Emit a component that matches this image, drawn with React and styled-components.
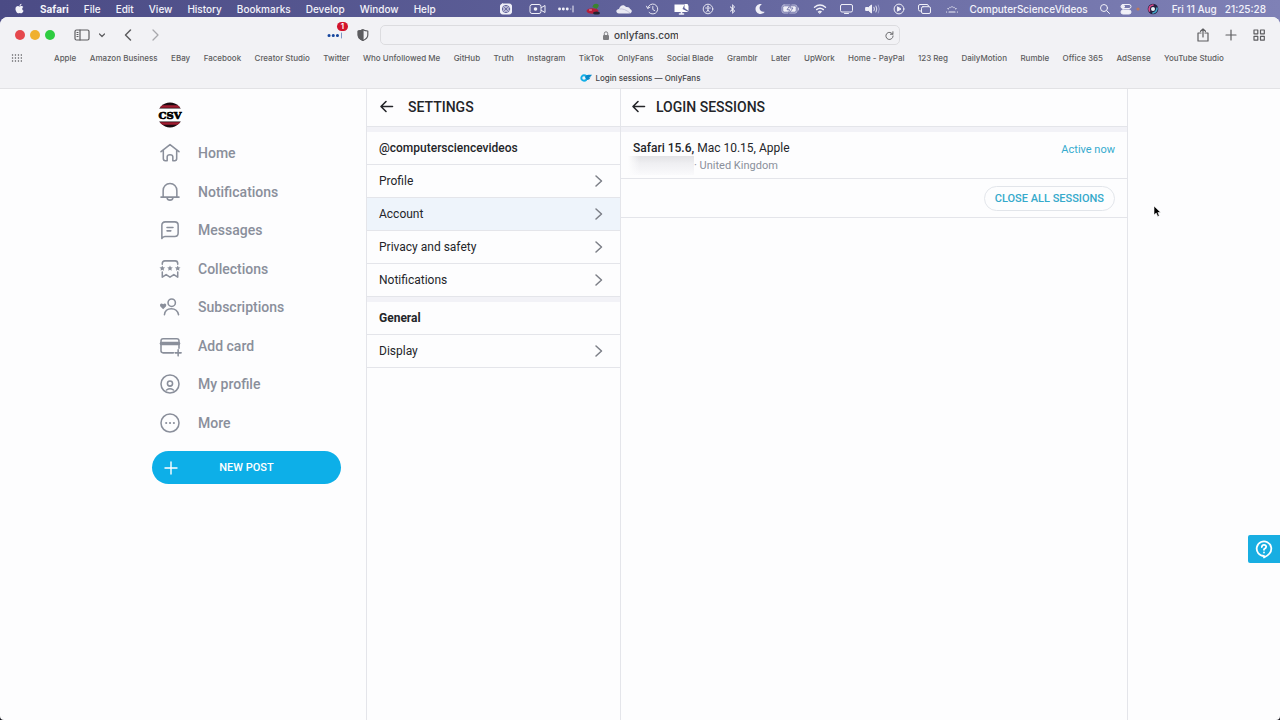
import React from "react";

import styled, { createGlobalStyle } from "styled-components";
import { FaApple, FaBluetoothB, FaMoon } from "react-icons/fa";

const GlobalStyle = createGlobalStyle`
  * {
    box-sizing: border-box;
  }

  body {
    margin: 0;
    background: #15151d;
    font-family: Roboto, "Liberation Sans", sans-serif;
    color: #242529;
  }

  button,
  input {
    font-family: inherit;
    padding: 0;
    border: 0;
    background: none;
    color: inherit;
  }

  a {
    color: inherit;
    text-decoration: none;
  }

  svg {
    display: block;
    flex-shrink: 0;
  }
`;

const Desktop = styled.div`
  position: relative;
  display: flex;
  flex-direction: column;
  min-height: 100vh;
  overflow: hidden;
`;

const Backdrop = styled.div`
  display: flex;
  flex-direction: column;
  flex: 1;
  background: linear-gradient(90deg, #4b4b85, #5d5f98 45%, #7f81b6) top / 100%
    40px no-repeat;
  font-family: Inter, "Liberation Sans", sans-serif;
`;

const MenuBar = styled.header`
  display: flex;
  align-items: center;
  justify-content: space-between;
  height: 17px;
  padding: 0 14px;
  color: #f3f3fa;
  font-size: 10px;
  font-weight: 500;
`;

const MenuGroup = styled.div`
  display: flex;
  align-items: center;
  gap: ${(props) => props.$gap}px;
  white-space: nowrap;
`;

const StatusGroup = styled(MenuGroup)`
  margin-right: -5px;
`;

const MenuItem = styled.button`
  font-size: 10px;
  line-height: 16px;
  font-weight: ${(props) => (props.$bold ? 700 : 500)};
`;

const BrowserWindow = styled.div`
  display: flex;
  flex-direction: column;
  flex: 1;
  border-radius: 8px 8px 4px 4px;
  background: #fdfdfe;
  overflow: hidden;
`;

const Chrome = styled.div`
  background: #f2f2f5;
  border-bottom: 1px solid #e2e2e5;
  color: #5d5d60;
`;

const Toolbar = styled.div`
  display: grid;
  grid-template-columns: 1fr minmax(0, 520px) 1fr;
  align-items: center;
  height: 36px;
`;

const ToolbarSide = styled.div`
  display: flex;
  align-items: center;
  justify-content: ${(props) => (props.$end ? "flex-end" : "space-between")};
  gap: ${(props) => (props.$end ? 16 : 12)}px;
  padding: ${(props) => (props.$end ? "0 15px" : "0 11px 0 15px")};
`;

const ToolGroup = styled.div`
  display: flex;
  align-items: center;
  gap: ${(props) => props.$gap}px;
`;

const TrafficLight = styled.button`
  width: 10px;
  height: 10px;
  border-radius: 50%;
  background: ${(props) => props.$color};
`;

const IconButton = styled.button`
  position: relative;
  display: flex;
  align-items: center;
  justify-content: center;
`;

const CountBadge = styled.span`
  position: absolute;
  top: -5px;
  right: -5px;
  width: 11px;
  border-radius: 5px;
  background: #d2142c;
  color: #fff;
  font-size: 8px;
  font-weight: 600;
  line-height: 9px;
  text-align: center;
`;

const AddressBar = styled.label`
  display: grid;
  grid-template-columns: 1fr auto 1fr;
  align-items: center;
  height: 20px;
  padding: 0 5px;
  border: 1px solid #dcdcdf;
  border-radius: 5px;
`;

const AddressText = styled.span`
  display: flex;
  align-items: center;
  gap: 4px;
  grid-column: 2;
`;

const AddressInput = styled.input`
  width: 64px;
  color: #424245;
  font-size: 10px;
  font-weight: 500;
  line-height: 16px;
  outline: none;
`;

const Reload = styled(IconButton)`
  justify-self: end;
`;

const Bookmarks = styled.nav`
  display: flex;
  align-items: center;
  height: 10px;
  padding: 0 56px 0 12px;
`;

const BookmarkList = styled.div`
  display: flex;
  justify-content: space-between;
  flex: 1;
  margin-left: 32px;
  font-size: 8px;
  font-weight: 500;
  line-height: 10px;
  white-space: nowrap;
`;

const Tab = styled.div`
  display: flex;
  align-items: center;
  justify-content: center;
  gap: 4px;
  height: 25px;
  padding-top: 5px;
  color: #424245;
  font-size: 8px;
  font-weight: 500;
`;

const Site = styled.div`
  display: grid;
  grid-template-columns: 214px 254px minmax(0, 1fr);
  flex: 1;
  width: 100%;
  max-width: 976px;
  margin: 0 auto;
  font-family: Roboto, "Liberation Sans", sans-serif;
`;

const Sidebar = styled.aside`
  padding: 13px 25px 0 0;
`;

const ProfileLink = styled.a`
  display: block;
  width: 26px;
  margin-left: 5px;
`;

const NavList = styled.nav`
  display: grid;
  grid-auto-rows: 1fr;
  height: 308px;
  margin: 6px 0 9px;
`;

const NavLink = styled.a`
  display: flex;
  align-items: center;
  gap: 16px;
  padding-left: 6px;
  color: #8a8f9b;
  font-size: 14px;
  font-weight: 500;
`;

const NewPost = styled.button`
  display: grid;
  grid-template-columns: 1fr auto 1fr;
  align-items: center;
  width: 100%;
  height: 33px;
  padding: 0 12px;
  border-radius: 17px;
  background: #0dafe8;
  color: #fff;
  font-size: 11px;
  font-weight: 500;
`;

const Column = styled.section`
  border-left: 1px solid #e4e5ea;
  border-right: ${(props) => (props.$last ? "1px solid #e4e5ea" : "0")};
`;

const ColumnHeader = styled.header`
  display: flex;
  align-items: center;
  gap: ${(props) => (props.$tight ? 10 : 14)}px;
  height: 37px;
  padding: 0 ${(props) => (props.$tight ? 10 : 12)}px 2px;
`;

const Title = styled.h1`
  margin: 0;
  font-size: 14px;
  font-weight: 500;
  line-height: 20px;
`;

const Band = styled.div`
  height: 6px;
  border-top: 1px solid #e4e5ea;
  background: #f2f2f7;
`;

const GroupTitle = styled.h2`
  margin: 0;
  padding: 0 12px;
  border-bottom: 1px solid #e4e5ea;
  font-size: 12px;
  font-weight: ${(props) => (props.$bold ? 700 : 500)};
  line-height: 32px;
`;

const SettingsRow = styled.a`
  display: flex;
  align-items: center;
  justify-content: space-between;
  padding: 0 16px 0 12px;
  border-bottom: ${(props) => (props.$plain ? "0" : "1px solid #e4e5ea")};
  background: ${(props) => (props.$active ? "#eef4fb" : "transparent")};
  font-size: 12px;
  line-height: 32px;
`;

const Session = styled.article`
  display: flex;
  justify-content: space-between;
  height: 47px;
  padding: 8px 12px 0;
  border-bottom: 1px solid #e4e5ea;
  font-size: 12px;
  line-height: 16px;

  strong {
    font-weight: 500;
  }
`;

const SessionPlace = styled.div`
  display: flex;
  margin-left: -5px;
  color: #8a8f9b;
  font-size: 11px;
  line-height: 19px;
`;

const HiddenAddress = styled.span`
  width: 66px;
  height: 19px;
  background: linear-gradient(90deg, #fdfdfe, transparent 12px),
    linear-gradient(#e2e2e5, #efeff2 40%, #fafafc);
`;

const ActiveLabel = styled.span`
  color: #35abce;
  font-size: 11px;
  line-height: 20px;
`;

const SessionActions = styled.div`
  display: flex;
  justify-content: flex-end;
  padding: 7px 12px 6px;
  border-bottom: 1px solid #e4e5ea;
`;

const OutlineButton = styled.button`
  height: 25px;
  padding: 0 10px;
  border: 1px solid #e2e5ea;
  border-radius: 13px;
  color: #35a9cb;
  font-size: 11px;
  font-weight: 500;
`;

const HelpButton = styled.button`
  position: absolute;
  top: 535px;
  right: 0;
  display: flex;
  align-items: center;
  justify-content: center;
  width: 32px;
  height: 28px;
  border-radius: 2px 0 0 2px;
  background: #18aee2;
`;

const Pointer = styled.svg`
  position: absolute;
  top: 205px;
  left: 1153px;
`;

/* Menu bar glyphs are drawn around their own centre. */
const Glyph = ({ width, children }) => (
  <svg
    width={width}
    height="12"
    viewBox={`${-width / 2} -6 ${width} 12`}
    fill="none"
    stroke="#f0f0f8"
    strokeLinecap="round"
    strokeLinejoin="round"
    overflow="visible"
    aria-hidden="true"
  >
    {children}
  </svg>
);

const StatusGlyphs = () => (
  <StatusGroup $gap={12}>
    <Glyph width={20}>
      <rect x="-5.5" y="-5" width="11" height="10" rx="2" fill="#f0f0f8" />
      <circle r="3.6" stroke="#5f619b" />
      <path d="M-3 0H3M0-3V3M-2-2L2 2M2-2L-2 2" stroke="#5f619b" strokeWidth=".8" />
    </Glyph>
    <Glyph width={19}>
      <rect x="-7.5" y="-4.5" width="11" height="9" rx="2" />
      <circle cx="-2" r="1.8" fill="#f0f0f8" stroke="none" />
      <path d="M4-1.5L7.5-3.5V3.5L4 1.5" />
    </Glyph>
    <Glyph width={14}>
      <path d="M-6.5 0H-6.4M-2.7 0H-2.6M1.2 0H1.3" strokeWidth="2.8" />
      <path d="M4.8 0V.1M7-3V3" strokeWidth="1" />
    </Glyph>
    <Glyph width={17}>
      <path d="M-1-2Q0-6 4-5Q7-4 3 0Z" fill="#39842f" stroke="none" />
      <ellipse cx="-1" cy="2" rx="6" ry="2.8" fill="#b51e3a" stroke="none" />
      <ellipse cx="3" cy="4" rx="3.4" ry="1.6" fill="#24232f" stroke="none" />
      <path d="M-4 1H-2" stroke="#f4a7ad" />
    </Glyph>
    <Glyph width={20}>
      <path
        d="M-5 4.5C-9 4-8 0-5 0C-4-4 0-5 2-2C5-2.5 6-.5 6 0C9 1 8 4.5 5 4.5Z"
        fill="#e9e9f3"
        stroke="none"
      />
      <path d="M-4 0Q0-1 6 4" stroke="#bcbcd6" strokeWidth=".8" />
    </Glyph>
    <Glyph width={13}>
      <path d="M-4.7-1A5 5 0 1 1-3.4 3.5M-6-2.8L-4.8-.5L-2.5-1.8M.3-2.5V.5L2.3 1.7" strokeWidth=".9" />
    </Glyph>
    <Glyph width={21}>
      <path d="M-7-4.5H3L1 0L7 3H-7Z" fill="#fff" stroke="none" />
      <path d="M3-5H6L7-3V2L3-1Z" fill="#fff" stroke="none" />
      <path d="M-2 5H2M0 3V5" strokeWidth="1.6" />
    </Glyph>
    <Glyph width={8}>
      <circle r="4.8" strokeWidth=".9" />
      <circle cy="-2.6" r=".8" fill="#f0f0f8" stroke="none" />
      <path d="M-2.4-1H2.4M0-1V.8L-1.4 3M0 .8L1.4 3" strokeWidth=".9" />
    </Glyph>
    <Glyph width={17}>
      <FaBluetoothB x="-5" y="-5" size={10} color="#f0f0f8" stroke="none" />
    </Glyph>
    <Glyph width={14}>
      <FaMoon x="-5" y="-5" size={10} color="#f0f0f8" stroke="none" />
    </Glyph>
    <Glyph width={22}>
      <rect x="-8" y="-4" width="15" height="8" rx="2" stroke="#b9bad8" />
      <rect x="-6.8" y="-2.8" width="12.6" height="5.6" rx="1" fill="#f0f0f8" stroke="none" />
      <path d="M1-5L-3 .7H-.5L-1.5 5L3-1H.3Z" fill="#f0f0f8" stroke="#686aa2" strokeWidth=".8" />
      <path d="M8.5-1V1" stroke="#b9bad8" />
    </Glyph>
    <Glyph width={14}>
      <path d="M-5.5-1.7Q0-6.3 5.5-1.7M-3.4.6Q0-2.2 3.4.6" strokeWidth="1.4" />
      <path d="M-1.5 2.6Q0 1.5 1.5 2.6L0 4.2Z" fill="#f0f0f8" />
    </Glyph>
    <Glyph width={15}>
      <rect x="-6" y="-4.5" width="12" height="7.5" rx="1.5" />
      <path d="M-2 4.5H2" />
    </Glyph>
    <Glyph width={13}>
      <path d="M-6.5-1.5H-4L-1-4V4L-4 1.5H-6.5Z" fill="#f0f0f8" />
      <path d="M1.5-1.8Q2.6 0 1.5 1.8M3.5-3Q5.3 0 3.5 3" strokeWidth=".9" />
      <path d="M5.8-4Q8 0 5.8 4" stroke="#a3a5cf" strokeWidth=".9" />
    </Glyph>
    <Glyph width={16}>
      <circle r="4.9" />
      <path d="M-1.2-2L2 0L-1.2 2Z" fill="#f0f0f8" />
    </Glyph>
    <Glyph width={11}>
      <path d="M-3.5 2H-4.5Q-6 2-6 .5V-3Q-6-4.5-4.5-4.5H2.5Q4-4.5 4-3" />
      <rect x="-3" y="-2.3" width="9" height="6.8" rx="1.5" />
    </Glyph>
    <Glyph width={20}>
      <path
        d="M-5.5 3H-5.4M-3 3H3M5.4 3H5.5M-4-.5L-3.7-.2M0-2.5V-2M4-.5L3.7-.2M-2-1.7V-1.4M2-1.7V-1.4"
        strokeWidth="1.1"
      />
    </Glyph>
  </StatusGroup>
);

/* Sidebar icons, all on a 24 unit grid. */
const navItems = [
  {
    label: "Home",
    icon: (
      <path d="M1.5 10.5L12 2.2L22.5 10.5M4.2 8.6V18.5Q4.2 21 6.5 21H8.7V16.5Q8.7 14 12 14Q15.3 14 15.3 16.5V21H17.5Q19.8 21 19.8 18.5V8.6" />
    ),
  },
  {
    label: "Notifications",
    icon: (
      <path d="M1.5 18H22.5M4 18V10.5C4 5.5 7.5 2.2 12 2.2S20 5.5 20 10.5V18M8.5 18.5Q9 21.5 12 21.5T15.5 18.5" />
    ),
  },
  {
    label: "Messages",
    icon: (
      <path d="M2.5 22V6.5Q2.5 2.5 6.5 2.5H17.5Q21.5 2.5 21.5 6.5V15.5Q21.5 19.5 17.5 19.5H6Q3.5 19.5 2.5 22ZM8.5 9H15.5M8.5 13H13" />
    ),
  },
  {
    label: "Collections",
    icon: (
      <>
        <path d="M3 6.5V5.5Q3 2.5 6 2.5H18Q21 2.5 21 5.5V6.5M3 15.5V21.5L7.5 18.5L12 21.5L16.5 18.5L21 21.5V15.5" />
        <path
          d="M3 8L4 10L6.3 10.3L4.6 11.8L5 14L3 13L1 14L1.4 11.8L-.3 10.3L2 10ZM12 8L13 10L15.3 10.3L13.6 11.8L14 14L12 13L10 14L10.4 11.8L8.7 10.3L11 10ZM21 8L22 10L24.3 10.3L22.6 11.8L23 14L21 13L19 14L19.4 11.8L17.7 10.3L20 10Z"
          fill="currentColor"
          stroke="none"
        />
      </>
    ),
  },
  {
    label: "Subscriptions",
    icon: (
      <>
        <circle cx="14" cy="7" r="4.3" />
        <path d="M5.5 21C6 16.5 9 14 13.5 14S21 16.5 22 21" />
        <path
          d="M4 14.5L.8 11.3C-.8 9 1.8 6.7 4 8.9C6.2 6.7 8.8 9 7.2 11.3Z"
          fill="currentColor"
          stroke="none"
        />
      </>
    ),
  },
  {
    label: "Add card",
    icon: (
      <>
        <path d="M16 20H4Q1.5 20 1.5 17.5V6Q1.5 3.5 4 3.5H20Q22.5 3.5 22.5 6V14.5M21.5 16.5V23.5M18 20H25" />
        <path d="M2 9H22" strokeWidth="4" />
      </>
    ),
  },
  {
    label: "My profile",
    icon: (
      <>
        <circle cx="12" cy="12" r="10.5" />
        <circle cx="12" cy="11.5" r="3" />
        <path d="M8 19Q12 16 16 19" />
      </>
    ),
  },
  {
    label: "More",
    icon: (
      <>
        <circle cx="12" cy="12" r="10.5" />
        <path d="M7.5 12H7.6M12 12H12.1M16.5 12H16.6" strokeWidth="2.4" />
      </>
    ),
  },
];

const menus = [
  "File",
  "Edit",
  "View",
  "History",
  "Bookmarks",
  "Develop",
  "Window",
  "Help",
];

const bookmarks = [
  "Apple",
  "Amazon Business",
  "EBay",
  "Facebook",
  "Creator Studio",
  "Twitter",
  "Who Unfollowed Me",
  "GitHub",
  "Truth",
  "Instagram",
  "TikTok",
  "OnlyFans",
  "Social Blade",
  "Gramblr",
  "Later",
  "UpWork",
  "Home - PayPal",
  "123 Reg",
  "DailyMotion",
  "Rumble",
  "Office 365",
  "AdSense",
  "YouTube Studio",
];

const settings = ["Profile", "Account", "Privacy and safety", "Notifications"];

const Line = ({ size = 16, box = 16, children, ...rest }) => (
  <svg
    width={size}
    height={size}
    viewBox={`0 0 ${box} ${box}`}
    fill="none"
    stroke="currentColor"
    strokeWidth="1.2"
    strokeLinecap="round"
    strokeLinejoin="round"
    overflow="visible"
    aria-hidden="true"
    {...rest}
  >
    {children}
  </svg>
);

const Chevron = () => (
  <Line size={10} box={10} stroke="#7c7f87" strokeWidth="1.5">
    <path d="M2 0L7.5 5L2 10" />
  </Line>
);

const BackButton = () => (
  <IconButton aria-label="Back">
    <Line size={15} box={15} strokeWidth="1.6">
      <path d="M13.5 7.5H2.5M7 2.5L2 7.5L7 12.5" />
    </Line>
  </IconButton>
);

const Avatar = () => (
  <svg width="26" height="26" viewBox="0 0 26 26" aria-hidden="true">
    <clipPath id="avatar">
      <circle cx="13" cy="13" r="12.5" />
    </clipPath>
    <g clipPath="url(#avatar)">
      <rect width="26" height="26" fill="#fff" />
      <path d="M0 0H26V6.5H0ZM0 19.5H26V26H0Z" fill="#1b0a10" />
      <path d="M0 3.2H26V5.8H0ZM0 20.2H26V22.8H0Z" fill="#a01c30" />
    </g>
    <text
      x="13"
      y="16.5"
      textAnchor="middle"
      fontFamily="DejaVu Serif, serif"
      fontSize="10"
      fontWeight="700"
      stroke="#000"
      strokeWidth=".7"
    >
      CSV
    </text>
  </svg>
);

const SystemMenu = () => (
  <MenuBar>
    <MenuGroup $gap={15}>
      <FaApple size={11} />
      <MenuItem $bold>Safari</MenuItem>
      {menus.map((menu) => (
        <MenuItem key={menu}>{menu}</MenuItem>
      ))}
    </MenuGroup>
    <MenuGroup $gap={12}>
      <StatusGlyphs />
      <MenuItem>ComputerScienceVideos</MenuItem>
      <Glyph width={10}>
        <circle cx="-1" cy="-1" r="3.5" />
        <path d="M2 2L4.5 4.5" />
      </Glyph>
      <Glyph width={8}>
        <rect x="-5" y="-4.5" width="10" height="4" rx="2" />
        <rect x="-5" y="1" width="10" height="4" rx="2" fill="#f0f0f8" />
        <circle cx="-3" cy="-2.5" r="1.5" fill="#f0f0f8" />
        <circle cx="12" r="1.6" fill="#b9785f" stroke="none" />
      </Glyph>
      <Glyph width={18}>
        <circle cx="2" r="5.3" fill="#252040" stroke="none" />
        <path d="M-1.5 2Q-3-3 2-4" stroke="#d94b8c" strokeWidth="1.6" />
        <path d="M2 4Q6 3 6-1" stroke="#41a7c9" strokeWidth="1.6" />
        <circle cx="2" r="2" fill="#e8f3f6" stroke="none" />
      </Glyph>
      <MenuItem>Fri 11 Aug&nbsp;&nbsp; 21:25:28</MenuItem>
    </MenuGroup>
  </MenuBar>
);

const BrowserChrome = () => (
  <Chrome>
    <Toolbar>
      <ToolbarSide>
        <ToolGroup $gap={19}>
          <ToolGroup $gap={5}>
            <TrafficLight $color="#e5484d" aria-label="Close" />
            <TrafficLight $color="#f0b02f" aria-label="Minimise" />
            <TrafficLight $color="#2ecc40" aria-label="Zoom" />
          </ToolGroup>
          <ToolGroup $gap={9}>
            <IconButton aria-label="Sidebar">
              <Line>
                <rect x="1" y="3" width="14" height="10" rx="1.5" />
                <path d="M6 3V13M3 5.5H4M3 7.5H4M3 9.5H4" />
              </Line>
            </IconButton>
            <IconButton aria-label="Tab groups">
              <Line size={6} box={6}>
                <path d="M.5 2L3 4.5L5.5 2" />
              </Line>
            </IconButton>
          </ToolGroup>
          <ToolGroup $gap={17}>
            <IconButton aria-label="Previous page">
              <Line size={10} box={10} strokeWidth="1.5">
                <path d="M6.5 0L1.5 5L6.5 10" />
              </Line>
            </IconButton>
            <IconButton aria-label="Next page">
              <Line size={10} box={10} stroke="#a8a8ac" strokeWidth="1.3">
                <path d="M2 0L7 5L2 10" />
              </Line>
            </IconButton>
          </ToolGroup>
        </ToolGroup>
        <ToolGroup $gap={14}>
          <IconButton aria-label="Password manager">
            <Line stroke="#17479e" strokeWidth="3">
              <path d="M2 8.5H2.1M6.2 8.5H6.3M10.4 8.5H10.5" />
              <path d="M14.5 6V11" stroke="#7d97c6" strokeWidth="1" />
            </Line>
            <CountBadge>1</CountBadge>
          </IconButton>
          <IconButton aria-label="Privacy report">
            <Line size={12} box={12}>
              <path d="M6 .8Q8 2 10.8 2V6Q10.8 9.500 6 11.500Q1.200 9.500 1.200 6V2Q4 2 6 .8Z" />
              <path d="M6 .8V11.500Q1.200 9.500 1.200 6V2Q4 2 6 .8Z" fill="currentColor" />
            </Line>
          </IconButton>
        </ToolGroup>
      </ToolbarSide>
      <AddressBar>
        <AddressText>
          <svg width="8" height="9" viewBox="0 0 8 9" aria-hidden="true">
            <rect x="1" y="4" width="6" height="5" rx="1" fill="#7d7d80" />
            <path d="M2.3 4V2.5Q2.3 .8 4 .8T5.7 2.5V4" fill="none" stroke="#7d7d80" />
          </svg>
          <AddressInput aria-label="Address" defaultValue="onlyfans.com" />
        </AddressText>
        <Reload aria-label="Reload">
          <Line size={9} box={10} strokeWidth="1">
            <path d="M8.5 3.5A4 4 0 1 0 9 5.5M8.8 .8V3.6H6" />
          </Line>
        </Reload>
      </AddressBar>
      <ToolbarSide $end>
        <IconButton aria-label="Share">
          <Line size={12} box={12}>
            <path d="M4 4H1V12H11V4H8M6 8V0M3.5 2.3L6 0L8.5 2.3" />
          </Line>
        </IconButton>
        <IconButton aria-label="New tab">
          <Line size={12} box={12}>
            <path d="M6 1V11M1 6H11" />
          </Line>
        </IconButton>
        <IconButton aria-label="Tab overview">
          <Line size={12} box={12}>
            <path d="M1 1H4.8V4.8H1ZM7.5 1H11.3V4.8H7.5ZM1 7.3H4.8V11.1H1ZM7.5 7.3H11.3V11.1H7.5Z" />
          </Line>
        </IconButton>
      </ToolbarSide>
    </Toolbar>
    <Bookmarks>
      <Line size={10} box={10} strokeWidth="1.4">
        <path d="M.5 2H.6M3.4 2H3.5M6.4 2H6.5M9.3 2H9.4M.5 5H.6M3.4 5H3.5M6.4 5H6.5M9.3 5H9.4M.5 8H.6M3.4 8H3.5M6.4 8H6.5M9.3 8H9.4" />
      </Line>
      <BookmarkList>
        {bookmarks.map((bookmark) => (
          <a key={bookmark} href="#">
            {bookmark}
          </a>
        ))}
      </BookmarkList>
    </Bookmarks>
    <Tab>
      <svg width="12" height="8" viewBox="0 0 12 8" aria-hidden="true">
        <circle cx="4" cy="4" r="2.7" fill="none" stroke="#13aee6" strokeWidth="1.9" />
        <path d="M5 3Q6 .8 8.5 .8H12Q11 3 9 3.2Q10 3.7 10.5 3.5Q9.5 6 7 6Z" fill="#0788c8" />
      </svg>
      Login sessions — OnlyFans
    </Tab>
  </Chrome>
);

const MainNav = () => (
  <Sidebar>
    <ProfileLink href="#" aria-label="Profile">
      <Avatar />
    </ProfileLink>
    <NavList>
      {navItems.map((item) => (
        <NavLink key={item.label} href="#">
          <Line size={24} box={28} strokeWidth="1.8">
            <g transform="translate(2 2)">{item.icon}</g>
          </Line>
          {item.label}
        </NavLink>
      ))}
    </NavList>
    <NewPost>
      <Line size={14} box={14} strokeWidth="1.4">
        <path d="M7 1V13M1 7H13" />
      </Line>
      NEW POST
    </NewPost>
  </Sidebar>
);

const SettingsMenu = () => (
  <Column>
    <ColumnHeader>
      <BackButton />
      <Title>SETTINGS</Title>
    </ColumnHeader>
    <Band />
    <GroupTitle>@computersciencevideos</GroupTitle>
    {settings.map((item, index) => (
      <SettingsRow
        key={item}
        href="#"
        $active={item === "Account"}
        $plain={index === settings.length - 1}
      >
        {item}
        <Chevron />
      </SettingsRow>
    ))}
    <Band />
    <GroupTitle $bold>General</GroupTitle>
    <SettingsRow href="#">
      Display
      <Chevron />
    </SettingsRow>
  </Column>
);

const LoginSessions = () => (
  <Column $last>
    <ColumnHeader $tight>
      <BackButton />
      <Title>LOGIN SESSIONS</Title>
    </ColumnHeader>
    <Band />
    <Session>
      <div>
        <strong>Safari 15.6,</strong> Mac 10.15, Apple
        <SessionPlace>
          <HiddenAddress />
          <span>· United Kingdom</span>
        </SessionPlace>
      </div>
      <ActiveLabel>Active now</ActiveLabel>
    </Session>
    <SessionActions>
      <OutlineButton>CLOSE ALL SESSIONS</OutlineButton>
    </SessionActions>
  </Column>
);

const App = () => {
  return (
    <Desktop>
      <GlobalStyle />
      <Backdrop>
        <SystemMenu />
        <BrowserWindow>
          <BrowserChrome />
          <Site>
            <MainNav />
            <SettingsMenu />
            <LoginSessions />
          </Site>
        </BrowserWindow>
      </Backdrop>
      <HelpButton aria-label="Help">
        <Line size={18} box={18} stroke="#fff" strokeWidth="1.8">
          <path d="M9 17.5V16A7.3 7.3 0 1 1 14.5 13.5Q12.5 16 9 17.5Z" />
          <path d="M6.8 7Q7 4.8 9 4.8T11.2 6.7Q11.2 8 9 9.2V9.8M9 12.5V12.6" />
        </Line>
      </HelpButton>
      <Pointer width="9" height="13" viewBox="0 0 9 13" aria-hidden="true">
        <path
          d="M1 1V10L3.2 8L4.7 11.5L6.3 10.8L4.9 7.5H7.7Z"
          fill="#000"
          stroke="#fff"
          strokeWidth=".6"
        />
      </Pointer>
    </Desktop>
  );
};

export default App;
